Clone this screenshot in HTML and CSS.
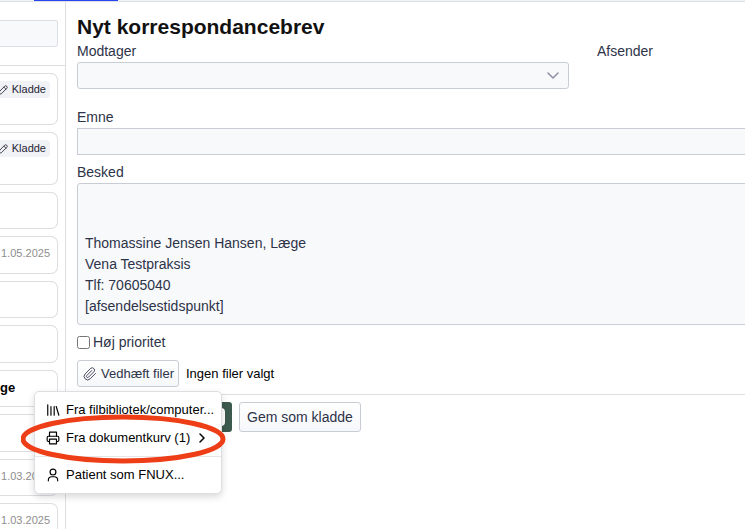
FILE: index.html
```html
<!DOCTYPE html>
<html lang="da">
<head>
    <meta charset="UTF-8">
    <title>Nyt korrespondancebrev</title>
    <meta name="viewport" content="width=device-width,initial-scale=1">
    <link rel="stylesheet" href="styles.css">
</head>
<body>

    <div class="tabs"><div class="tab_active"></div></div>

    <div class="page">
        <aside class="sidebar">
            <div class="search_box">
                <input type="text" class="search" aria-label="Søg">
            </div>
            <div class="letters">
                <div class="letter draft">
                    <span class="tag">
                        <svg viewBox="0 0 24 24"><path d="M2 22l2-7L16 3a3.500 3.500 0 0 1 5 5L9 20z"/><path d="M14 5l5 5"/></svg>
                        Kladde
                    </span>
                </div>
                <div class="letter draft">
                    <span class="tag">
                        <svg viewBox="0 0 24 24"><path d="M2 22l2-7L16 3a3.500 3.500 0 0 1 5 5L9 20z"/><path d="M14 5l5 5"/></svg>
                        Kladde
                    </span>
                </div>
                <div class="letter"></div>
                <div class="letter"><span class="date">1.05.2025</span></div>
                <div class="letter"></div>
                <div class="letter"></div>
                <div class="letter"><b class="sender">ge</b></div>
                <div class="letter"></div>
                <div class="letter"><span class="date">1.03.2025</span></div>
                <div class="letter"><span class="date">1.03.2025</span></div>
            </div>
        </aside>

        <main class="content">
            <form class="form">
                <h1>Nyt korrespondancebrev</h1>
                <div class="parties">
                    <div>
                        <label for="modtager">Modtager</label>
                        <div class="select_box">
                            <select id="modtager"><option></option></select>
                            <svg viewBox="0 0 12 8"><path d="M1 1l5 5 5-5"/></svg>
                        </div>
                    </div>
                    <div class="label">Afsender</div>
                </div>

                <div class="field wide">
                    <label for="emne">Emne</label>
                    <input type="text" id="emne" class="subject">
                </div>

                <div class="field wide">
                    <label for="besked">Besked</label>
                    <textarea id="besked" rows="6">


Thomassine Jensen Hansen, Læge
Vena Testpraksis
Tlf: 70605040
[afsendelsestidspunkt]</textarea>
                </div>

                <div class="field priority">
                    <input type="checkbox" id="prioritet">
                    <label for="prioritet">Høj prioritet</label>
                </div>

                <div class="field attach">
                    <button type="button" class="btn btn_small">
                        <svg viewBox="0 0 24 24"><path d="M21.400 11.100l-9.200 9.200a6 6 0 0 1-8.500-8.500l9.200-9.200a4 4 0 0 1 5.700 5.700l-9.200 9.200a2 2 0 0 1-2.900-2.900l8.500-8.500"/></svg>
                        Vedhæft filer
                    </button>
                    <span class="no_files">Ingen filer valgt</span>

                    <div class="menu">
                        <button type="button" class="menu_item">
                            <svg viewBox="0 0 24 24"><path d="M3 3v18M8.500 6v15M14 6v15M17.500 6l4.500 15"/></svg>
                            Fra filbibliotek/computer...
                        </button>
                        <button type="button" class="menu_item">
                            <svg viewBox="0 0 24 24"><path d="M6 18H4a2 2 0 0 1-2-2v-5a2 2 0 0 1 2-2h16a2 2 0 0 1 2 2v5a2 2 0 0 1-2 2h-2"/><path d="M6 9V2h12v7"/><path d="M6 14h12v8H6z"/></svg>
                            Fra dokumentkurv (1)
                            <svg class="arrow" viewBox="0 0 24 24"><path d="M8 4l8 8-8 8"/></svg>
                        </button>
                        <hr>
                        <button type="button" class="menu_item">
                            <svg viewBox="0 0 24 24"><circle cx="12" cy="7" r="5"/><path d="M4 22v-1a6 6 0 0 1 6-6h4a6 6 0 0 1 6 6v1"/></svg>
                            Patient som FNUX...
                        </button>
                        <svg class="marker" viewBox="0 0 206 50"><ellipse cx="102" cy="25" rx="100" ry="22"/></svg>
                    </div>
                </div>
            </form>

            <div class="actions">
                <button type="button" class="btn_send" aria-label="Send"><span class="badge"></span></button>
                <button type="button" class="btn">Gem som kladde</button>
            </div>
        </main>
    </div>

</body>
</html>
```
FILE: styles.css
```css
*{
    box-sizing:border-box;
}
body{
    margin:0;
    height:100vh;
    display:flex;
    flex-direction:column;
    overflow:hidden;
    background:#fff;
    color:#2d3348;
    font-family:"Liberation Sans",Arial,sans-serif;
    font-size:14px;
    line-height:21px;
}
input,select,textarea,button{
    font:inherit;
    color:inherit;
    margin:0;
}
svg{
    fill:none;
    stroke:currentColor;
    stroke-width:2;
    stroke-linecap:round;
    stroke-linejoin:round;
    flex:none;
}
.tabs{
    flex:none;
    height:2px;
    padding-left:34px;
    background:#f1f3f7;
    border-bottom:1px solid #dcdfe4;
}
.tab_active{
    width:84px;
    height:1px;
    background:#2546f0;
}
.page{
    flex:1;
    min-height:0;
    display:flex;
}

/* letter list */
.sidebar{
    flex:none;
    width:66px;
    overflow:hidden;
    border-right:1px solid #dddee1;
}
.search_box{
    padding:18px 7px 18px 0;
    border-bottom:1px solid #dddee1;
}
.search{
    display:block;
    width:100%;
    height:27px;
    border:1px solid #dcdfe4;
    border-left:0;
    border-radius:0 3px 3px 0;
    background:#f8f9fb;
}
.letters{
    display:flex;
    flex-direction:column;
    gap:7px;
    padding:7px 7px 0 0;
}
.letter{
    flex:none;
    display:flex;
    align-items:center;
    height:37px;
    padding-bottom:3px;
    border:1px solid #dddee1;
    border-left:0;
    border-radius:0 7px 7px 0;
}
.letter:nth-child(even){
    height:38px;
}
.letter.draft{
    height:52px;
    align-items:flex-start;
    justify-content:flex-end;
    padding:7px 7px 0 0;
}
.letter.draft:nth-child(even){
    height:53px;
}
.tag{
    display:flex;
    align-items:center;
    gap:4px;
    height:17px;
    padding:0 4px;
    border-radius:4px;
    background:#f1f2f6;
    color:#1f2433;
    font-size:11px;
}
.tag svg{
    width:10px;
    height:10px;
}
.date{
    margin-left:auto;
    padding-right:7px;
    color:#8e8e8e;
    font-size:11px;
}
.sender{
    color:#000;
    font-size:13px;
}

/* form */
.content{
    flex:1;
    min-width:0;
}
.form{
    padding:11px 0 7px 11px;
    border-bottom:1px solid #dddee1;
}
h1{
    margin:0;
    color:#111;
    font-size:21px;
    line-height:28px;
}
label,.label{
    display:block;
}
.parties{
    display:grid;
    grid-template-columns:1fr 148px;
    gap:28px;
    margin-bottom:18px;
}
.select_box{
    position:relative;
}
select,.subject,textarea{
    display:block;
    width:100%;
    border:1px solid #c8ccd5;
    border-radius:3px;
    background:#f8f9fb;
}
select{
    height:27px;
    appearance:none;
    -webkit-appearance:none;
}
.select_box svg{
    position:absolute;
    right:10px;
    top:10px;
    width:12px;
    height:8px;
    color:#8d91a5;
    stroke-width:1.5;
}
.field{
    margin-bottom:7px;
}
/* the fields run on past the right edge of the window */
.wide{
    margin-right:-14px;
}
.subject{
    height:27px;
    border-radius:0;
}
textarea{
    padding:7px;
    resize:none;
    overflow:hidden;
}
.priority{
    display:flex;
    align-items:center;
    gap:3px;
}
.priority input{
    width:13px;
    height:13px;
}
.attach{
    position:relative;
    display:flex;
    align-items:center;
    gap:7px;
    margin-bottom:0;
}
.btn{
    display:flex;
    align-items:center;
    height:30px;
    padding:0 7px;
    border:1px solid #c8ccd5;
    border-radius:3px;
    background:linear-gradient(#fff,#f6f7fa);
}
.btn_small{
    gap:4px;
    height:27px;
    padding:0 4px 0 5px;
    font-size:13px;
}
.btn_small svg{
    width:14px;
    height:14px;
    stroke-width:1.5;
}
.no_files{
    color:#000;
    font-size:13px;
}

/* attach menu */
.menu{
    position:absolute;
    z-index:1;
    left:-43px;
    top:31px;
    width:188px;
    padding:4px 0;
    border:1px solid #dddee1;
    border-radius:5px;
    background:#fff;
    box-shadow:0 3px 7px rgba(0,0,0,.15);
    color:#000;
    font-size:13px;
}
.menu_item{
    display:flex;
    align-items:center;
    gap:6px;
    width:100%;
    height:28px;
    padding:0 0 1px 11px;
    border:0;
    background:none;
    white-space:nowrap;
}
.menu_item svg{
    width:14px;
    height:14px;
}
.menu_item .arrow{
    width:12px;
    height:12px;
    stroke-width:3;
}
.menu hr{
    margin:4px 0;
    border:0;
    border-top:1px solid #e6e6e8;
}
.marker{
    position:absolute;
    left:-14px;
    top:22px;
    width:206px;
    height:50px;
    color:#ee3e17;
    stroke-width:5;
    pointer-events:none;
}

.actions{
    display:flex;
    gap:7px;
    padding:7px 11px;
}
.btn_send{
    display:flex;
    align-items:center;
    justify-content:flex-end;
    width:155px;
    height:30px;
    padding:0 7px;
    border:0;
    border-radius:3px;
    background:#3d5a4e;
}
.badge{
    width:18px;
    height:18px;
    border-radius:4px;
    background:#fff;
}
```
